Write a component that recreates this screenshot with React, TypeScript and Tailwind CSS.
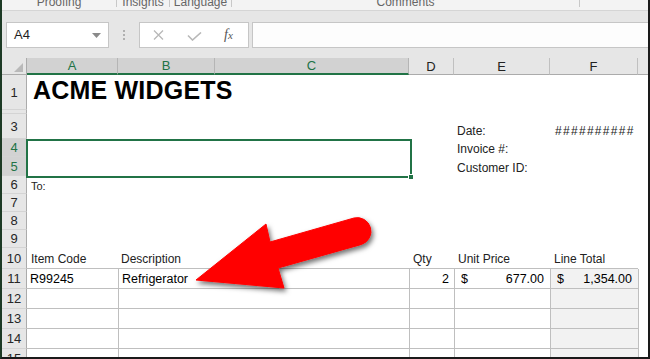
import React from "react";

const GREEN = "#217346";

const RowHead = ({ n, h, sel }: { n: number; h: string; sel?: boolean }) => (
  <div
    className={`${h} w-[25px] shrink-0 flex items-center justify-center border-r border-b border-r-[#ababab] border-b-[#d4d4d4] text-[13px] leading-none ${
      sel ? "bg-[#d2d2d2] text-[#217346]" : "bg-[#e6e6e6] text-[#262626]"
    }`}
  >
    {n < 2 || n > 2 ? n : ""}
  </div>
);

const Sep = () => <div className="w-px h-[7px] bg-[#c8c8c8] shrink-0" />;

const App: React.FC = () => {
  const emptyRows = [7, 8, 9];
  const tableRows = [12, 13, 14, 15];

  return (
    <div
      className="relative w-[650px] h-[359px] overflow-hidden bg-white border-l-2 border-r-2 border-b-2 border-l-[#1d3a25] border-r-[#1a1a1a] border-b-[#1a1a1a] select-none"
      style={{ fontFamily: '"Liberation Sans", Arial, sans-serif' }}
    >
      {/* ribbon group labels (cut off) */}
      <div className="flex h-[11px] overflow-hidden bg-[#f3f3f3] border-b border-[#d5d5d5] text-[12px] leading-[12px] text-[#666]">
        <div className="w-[114px] flex justify-center">
          <span className="-mt-[4px]">Proofing</span>
        </div>
        <Sep />
        <div className="w-[52px] flex justify-center">
          <span className="-mt-[4px]">Insights</span>
        </div>
        <Sep />
        <div className="w-[61px] flex justify-center">
          <span className="-mt-[4px]">Language</span>
        </div>
        <Sep />
        <div className="w-[347px] flex justify-center">
          <span className="-mt-[4px]">Comments</span>
        </div>
        <Sep />
        <div className="flex-1" />
      </div>

      {/* formula bar */}
      <div className="flex items-start h-[47px] pt-[11px] bg-[#e6e6e6]">
        <div className="ml-[4px] w-[103px] h-[26px] bg-white border border-[#c6c6c6] flex items-center justify-between pl-[7px] pr-[7px]">
          <span className="text-[13px] text-[#1f1f1f]">A4</span>
          <svg width="9" height="5" viewBox="0 0 9 5">
            <polygon points="0,0 9,0 4.5,5" fill="#8a8a8a" />
          </svg>
        </div>
        <div className="w-[30px] h-[26px] flex flex-col items-center justify-center gap-[2px]">
          <div className="w-[2px] h-[2px] bg-[#b0b0b0]" />
          <div className="w-[2px] h-[2px] bg-[#b0b0b0]" />
          <div className="w-[2px] h-[2px] bg-[#b0b0b0]" />
        </div>
        <div className="w-[110px] h-[26px] bg-white border border-[#c6c6c6] flex items-center">
          <svg width="11" height="10" viewBox="0 0 11 10" className="ml-[13px]">
            <path d="M1 0.5 L10 9.5 M10 0.5 L1 9.5" stroke="#b8b8b8" strokeWidth="1.3" />
          </svg>
          <svg width="15" height="9" viewBox="0 0 15 9" className="ml-[23px] mt-[3px]">
            <path d="M1 3.5 L5.5 8 L14 0.5" stroke="#b8b8b8" strokeWidth="1.6" fill="none" />
          </svg>
          <span
            className="ml-[22px] text-[14px] italic text-[#555] leading-none"
            style={{ fontFamily: '"Liberation Serif", serif' }}
          >
            f<span className="text-[11px]">x</span>
          </span>
        </div>
        <div className="ml-[3px] flex-1 h-[26px] bg-[#fdfdfd] border-t border-b border-l border-[#c6c6c6]" />
      </div>

      {/* column headers */}
      <div className="flex h-[17px] text-[13px] leading-none">
        <div className="w-[25px] shrink-0 bg-[#e6e6e6] border-r border-b border-[#ababab] flex items-end justify-end pr-[3px] pb-[2px]">
          <svg width="9" height="9" viewBox="0 0 9 9">
            <polygon points="9,0 9,9 0,9" fill="#b9b9b9" />
          </svg>
        </div>
        <div className="w-[91px] shrink-0 bg-[#d2d2d2] text-[#217346] border-r border-r-[#b5b5b5] border-b-2 border-b-[#217346] flex items-center justify-center">
          A
        </div>
        <div className="w-[97px] shrink-0 bg-[#d2d2d2] text-[#217346] border-r border-r-[#b5b5b5] border-b-2 border-b-[#217346] flex items-center justify-center">
          B
        </div>
        <div className="w-[194px] shrink-0 bg-[#d2d2d2] text-[#217346] border-r border-r-[#b5b5b5] border-b-2 border-b-[#217346] flex items-center justify-center">
          C
        </div>
        <div className="w-[45px] shrink-0 bg-[#e6e6e6] text-[#222] border-r border-b border-r-[#c0c0c0] border-b-[#ababab] flex items-center justify-center">
          D
        </div>
        <div className="w-[96px] shrink-0 bg-[#e6e6e6] text-[#222] border-r border-b border-r-[#c0c0c0] border-b-[#ababab] flex items-center justify-center">
          E
        </div>
        <div className="w-[88px] shrink-0 bg-[#e6e6e6] text-[#222] border-r border-b border-r-[#c0c0c0] border-b-[#ababab] flex items-center justify-center">
          F
        </div>
        <div className="flex-1 bg-[#e6e6e6] border-b border-[#ababab]" />
      </div>

      {/* row 1 */}
      <div className="flex">
        <RowHead n={1} h="h-[35px]" />
        <div className="flex-1 pl-[6px]">
          <div className="text-[25px] font-bold leading-[30px] text-black tracking-[0.2px]">ACME WIDGETS</div>
        </div>
      </div>

      {/* row 2 (nearly hidden) */}
      <div className="flex">
        <RowHead n={2} h="h-[4px]" />
      </div>

      {/* row 3 */}
      <div className="flex text-[12px] leading-[14px] text-[#222]">
        <RowHead n={3} h="h-[25px]" />
        <div className="w-[427px] shrink-0" />
        <div className="w-[96px] shrink-0 flex items-end pl-[3px] pb-[1px]">Date:</div>
        <div className="w-[88px] shrink-0 flex items-end pl-[5px] pb-[1px] tracking-[1.3px]">##########</div>
      </div>

      {/* row 4 */}
      <div className="flex text-[12px] leading-[14px] text-[#222]">
        <RowHead n={4} h="h-[18px]" sel />
        <div className="w-[427px] shrink-0" />
        <div className="w-[96px] shrink-0 flex items-end pl-[3px] pb-[1px] whitespace-nowrap">Invoice #:</div>
      </div>

      {/* row 5 */}
      <div className="flex text-[12px] leading-[14px] text-[#222]">
        <RowHead n={5} h="h-[19px]" sel />
        <div className="w-[427px] shrink-0" />
        <div className="w-[96px] shrink-0 flex items-end pl-[3px] pb-[1px] whitespace-nowrap">Customer ID:</div>
      </div>

      {/* row 6 */}
      <div className="flex text-[11px] leading-[14px] text-[#222]">
        <RowHead n={6} h="h-[18px]" />
        <div className="w-[91px] shrink-0 flex items-end pl-[4px] pb-[1px]">To:</div>
      </div>

      {emptyRows.map((n) => (
        <div key={n} className="flex">
          <RowHead n={n} h="h-[18px]" />
        </div>
      ))}

      {/* row 10: table labels */}
      <div className="flex text-[12px] leading-[14px] text-[#222]">
        <RowHead n={10} h="h-[21px]" />
        <div className="w-[91px] shrink-0 flex items-end pl-[4px] pb-[2px] border-b border-[#bfbfbf]">Item Code</div>
        <div className="w-[291px] shrink-0 flex items-end pl-[3px] pb-[2px] border-b border-[#bfbfbf]">Description</div>
        <div className="w-[45px] shrink-0 flex items-end pl-[4px] pb-[2px] border-b border-[#bfbfbf]">Qty</div>
        <div className="w-[96px] shrink-0 flex items-end pl-[4px] pb-[2px] border-b border-[#bfbfbf]">Unit Price</div>
        <div className="w-[88px] shrink-0 flex items-end pl-[4px] pb-[2px] border-b border-[#bfbfbf]">Line Total</div>
      </div>

      {/* row 11: data */}
      <div className="flex text-[12.5px] leading-[14px] text-black">
        <RowHead n={11} h="h-[20px]" />
        <div className="w-[91px] shrink-0 flex items-end pl-[3px] pb-[2px] border-b border-[#bfbfbf]">R99245</div>
        <div className="w-[291px] shrink-0 flex items-end pl-[3px] pb-[2px] border-b border-l border-[#bfbfbf]">Refrigerator</div>
        <div className="w-[45px] shrink-0 flex items-end justify-end pr-[5px] pb-[2px] border-b border-l border-[#bfbfbf]">2</div>
        <div className="w-[96px] shrink-0 flex items-end justify-between pl-[6px] pr-[6px] pb-[2px] border-b border-l border-[#bfbfbf]">
          <span>$</span>
          <span>677.00</span>
        </div>
        <div className="w-[89px] shrink-0 flex items-end justify-between pl-[6px] pr-[6px] pb-[2px] bg-[#f2f2f2] border-b border-l border-r border-[#bfbfbf]">
          <span>$</span>
          <span>1,354.00</span>
        </div>
      </div>

      {tableRows.map((n) => (
        <div key={n} className="flex">
          <RowHead n={n} h="h-[20px]" />
          <div className="w-[91px] shrink-0 border-b border-[#bfbfbf]" />
          <div className="w-[291px] shrink-0 border-b border-l border-[#bfbfbf]" />
          <div className="w-[45px] shrink-0 border-b border-l border-[#bfbfbf]" />
          <div className="w-[96px] shrink-0 border-b border-l border-[#bfbfbf]" />
          <div className="w-[89px] shrink-0 bg-[#f2f2f2] border-b border-l border-r border-[#bfbfbf]" />
        </div>
      ))}

      {/* selection A4:C5 */}
      <div className="absolute left-[24px] top-[139px] w-[386px] h-[39px] border-2 border-[#217346] pointer-events-none">
        <div className="absolute -right-[4px] -bottom-[4px] w-[6px] h-[6px] bg-[#217346] border border-white" />
      </div>

      {/* callout arrow */}
      <svg
        className="absolute -left-[2px] top-0 pointer-events-none"
        width="650"
        height="359"
        viewBox="0 0 650 359"
      >
        <defs>
          <filter id="shadow" x="-20%" y="-20%" width="140%" height="140%">
            <feDropShadow dx="2" dy="3" stdDeviation="2.5" floodColor="#000" floodOpacity="0.55" />
          </filter>
        </defs>
        <path
          d="M196,280 L266,224 L270,242 L354,218 A13.75,13.75 0 0 1 361.6,244.4 L278,268 L284,288 Z"
          fill="#ff0000"
          stroke="#ff0000"
          strokeWidth="1"
          strokeLinejoin="round"
          filter="url(#shadow)"
        />
      </svg>
      <span className="hidden" style={{ color: GREEN }} />
    </div>
  );
};

export default App;
